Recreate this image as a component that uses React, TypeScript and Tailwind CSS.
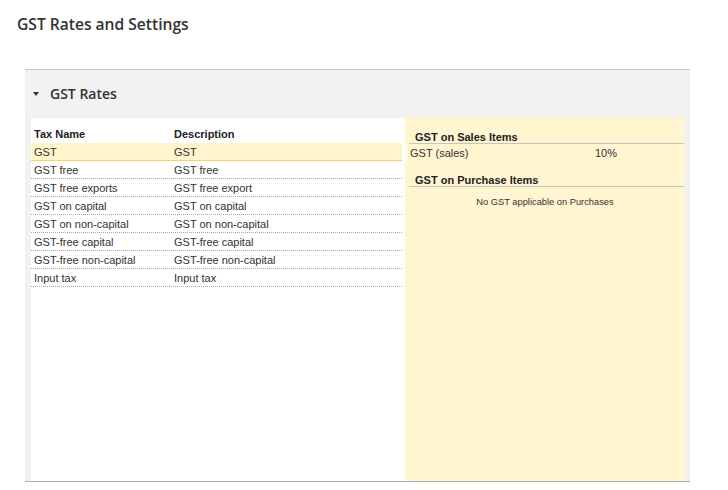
import React from "react";

const rows: [string, string][] = [
  ["GST", "GST"],
  ["GST free", "GST free"],
  ["GST free exports", "GST free export"],
  ["GST on capital", "GST on capital"],
  ["GST on non-capital", "GST on non-capital"],
  ["GST-free capital", "GST-free capital"],
  ["GST-free non-capital", "GST-free non-capital"],
  ["Input tax", "Input tax"],
];

export default function App() {
  return (
    <div className="w-[728px] h-[490px] bg-white text-[#333] font-['Liberation_Sans',Arial,sans-serif] overflow-hidden">
      <div className="h-[69px] pl-[17px] pt-[14px]">
        <h1 className="font-['Open_Sans',sans-serif] font-semibold text-[15.6px] leading-[20px] text-[#333]">
          GST Rates and Settings
        </h1>
      </div>
      <div className="ml-[25px] w-[665px] border-t border-b border-t-[#c8c8c8] border-b-[#b0b0b0] bg-[#f2f2f2]">
        <div className="h-[47px] flex items-center pl-[8px]">
          <svg width="6" height="4" viewBox="0 0 6 4" className="mr-[11px] mt-[1px]">
            <path d="M0 0 L6 0 L3 4 Z" fill="#333" />
          </svg>
          <span className="font-['Open_Sans',sans-serif] font-semibold text-[14px] text-[#333] leading-[18px]">
            GST Rates
          </span>
        </div>
        <div className="flex h-[364px] pl-[6px] pr-[5px]">
          <div className="w-[374px] bg-white mt-px pl-0 pr-[3px]">
            <div className="flex h-[25px] pt-[7px] text-[11px] font-bold text-[#222] leading-[18px] pl-[3px]">
              <div className="w-[140px]">Tax Name</div>
              <div>Description</div>
            </div>
            {rows.map(([a, b], i) => (
              <div
                key={a}
                className={
                  i === 0
                    ? "flex h-[18px] border-b border-[#f0d56a] bg-[#fff4cc] text-[11px] leading-[17px] pt-px pl-[3px] text-[#333]"
                    : "flex h-[18px] border-b border-dotted border-[#a8a8a8] text-[11px] leading-[17px] pt-px pl-[3px] text-[#333]"
                }
              >
                <div className="w-[140px]">{a}</div>
                <div>{b}</div>
              </div>
            ))}
          </div>
          <div className="flex-1 bg-[#fff5d1] pt-[12px]">
            <div className="ml-[4px] mr-[1px] border-b border-[#c4c4c4] pl-[6px] pt-[2px] text-[11px] font-bold text-[#222] leading-[12px] h-[15px]">
              GST on Sales Items
            </div>
            <div className="flex h-[18px] border-l border-white ml-px text-[11px] leading-[18px] pl-[3px] text-[#333]">
              <div className="w-[185px]">GST (sales)</div>
              <div>10%</div>
            </div>
            <div className="mt-[10px] ml-[4px] mr-[1px] border-b border-[#c4c4c4] pl-[6px] pt-[2px] text-[11px] font-bold text-[#222] leading-[12px] h-[15px]">
              GST on Purchase Items
            </div>
            <div className="text-center text-[9.3px] leading-[16px] pt-[7px] text-[#333]">
              No GST applicable on Purchases
            </div>
          </div>
        </div>
      </div>
    </div>
  );
}
